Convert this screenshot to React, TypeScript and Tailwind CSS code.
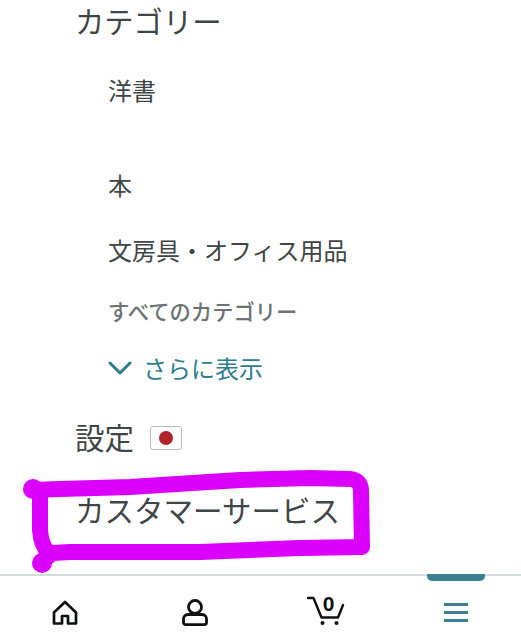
import React from "react";

const jp = { fontFamily: '"Noto Sans CJK JP", "Noto Sans", sans-serif' };

function Home() {
  return (
    <svg width="26" height="26" viewBox="0 0 26 26" fill="none" stroke="#0f1111" strokeWidth="2.700" strokeLinejoin="round" strokeLinecap="round">
      <path d="M2 12.500 13 2l11 10.500v11h-8v-7.500h-6v7.500H2z" />
    </svg>
  );
}
function User() {
  return (
    <svg width="26" height="28" viewBox="0 0 26 28" fill="none" stroke="#0f1111" strokeWidth="2.800" strokeLinejoin="round">
      <circle cx="13" cy="8" r="6.500" />
      <path d="M6 15.500h14a4.500 4.500 0 0 1 4.500 4.500v3.500a2.200 2.200 0 0 1-2.200 2.200H3.700a2.200 2.200 0 0 1-2.200-2.200V20A4.500 4.500 0 0 1 6 15.500z" />
    </svg>
  );
}
function Cart() {
  return (
    <div className="relative h-[30px] w-[38px]">
      <svg width="38" height="30" viewBox="0 0 38 30" fill="none" stroke="#0f1111" strokeWidth="2.400" strokeLinejoin="round" strokeLinecap="round" className="absolute left-0 top-0">
        <path d="M1 2h5.500l8 19.500h15.500M36 9l-5 12.500" />
        <circle cx="15.500" cy="27" r="2" fill="#0f1111" stroke="none" />
        <circle cx="29.500" cy="27" r="2" fill="#0f1111" stroke="none" />
      </svg>
      <span className="absolute left-[16px] top-[-5px] text-[21px] leading-[26px] font-bold text-[#0f1111]" style={{ fontFamily: '"Liberation Sans", sans-serif' }}>0</span>
    </div>
  );
}

export default function App() {
  return (
    <div className="relative flex h-[640px] w-[521px] flex-col overflow-hidden bg-white text-[#404646]" style={jp}>
      <main className="flex-1 pl-[75px]">
        <h2 className="h-[40px] text-[29.300px] leading-[40px]">カテゴリー</h2>
        <ul className="pl-[33px] text-[24px] leading-[36px]">
          <li className="pt-[32px]">洋書</li>
          <li className="pt-[59px]">本</li>
          <li className="pt-[29px]">文房具・オフィス用品</li>
          <li className="pt-[25px] text-[21.300px] leading-[36px] font-medium text-[#6b7373]">すべてのカテゴリー</li>
          <li className="flex items-center gap-[11px] pt-[21px] text-[#2d7c90]">
            <svg width="24" height="14" viewBox="0 0 24 14" fill="none" stroke="#2d7c90" strokeWidth="3" strokeLinecap="round" strokeLinejoin="round">
              <path d="M2 2l10 10L22 2" />
            </svg>
            <span>さらに表示</span>
          </li>
        </ul>
        <div className="flex items-center gap-[16px] pt-[27px]">
          <span className="text-[29.500px] leading-[46px]">設定</span>
          <span className="mt-[4px] flex h-[24px] w-[32px] items-center justify-center rounded-[3px] border border-[#b6baba] bg-white">
            <span className="h-[14px] w-[14px] rounded-full bg-[#b0232a]" />
          </span>
        </div>
        <div className="pt-[27px] text-[29.500px] leading-[46px]">カスタマーサービス</div>
      </main>

      <nav className="relative grid h-[66px] grid-cols-4 border-t-2 border-[#d5dbdb] bg-white">
        <span className="absolute left-[427px] top-[-2px] h-[7px] w-[58px] rounded-b-[5px] bg-[#3c7f93]" />
        <div className="flex items-center justify-center pt-[9px]"><Home /></div>
        <div className="flex items-center justify-center pt-[9px]"><User /></div>
        <div className="flex items-center justify-center pt-[6px]"><Cart /></div>
        <div className="flex flex-col items-center justify-center gap-[5.500px] pt-[9px]">
          <span className="h-[2.500px] w-[24px] bg-[#3c7f93]" />
          <span className="h-[2.500px] w-[24px] bg-[#3c7f93]" />
          <span className="h-[2.500px] w-[24px] bg-[#3c7f93]" />
        </div>
      </nav>

      <svg className="pointer-events-none absolute left-0 top-0" width="521" height="640" viewBox="0 0 521 640" fill="none" stroke="#db00fb" strokeWidth="16" strokeLinecap="round" strokeLinejoin="round">
        <path d="M33 490 L60 489 L130 487 L240 480 L310 478 L350 479 Q361 480 361 491 L362 547 L300 548 L200 552 L70 552 L52 553 L42 562 M40 492 L40 530 Q41 545 48 552" />
        <circle cx="42" cy="563" r="10" fill="#db00fb" stroke="none" />
        <circle cx="33" cy="489" r="10" fill="#db00fb" stroke="none" />
      </svg>
    </div>
  );
}
